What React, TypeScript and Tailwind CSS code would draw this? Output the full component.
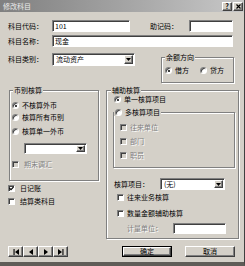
import type { ReactNode } from 'react'

const sunken =
  'border border-t-[#808080] border-l-[#808080] border-b-white border-r-white shadow-[inset_1px_1px_0_#404040]'
const raised =
  'border border-t-white border-l-white border-b-[#404040] border-r-[#404040] shadow-[inset_-1px_-1px_0_#808080] bg-[#d4d0c8]'
const etched = 'border border-[#808080] shadow-[inset_1px_1px_0_#fff,1px_1px_0_#fff]'
const grayText = 'text-[#808080] [text-shadow:1px_1px_0_#fff]'

function Radio({ checked, label, className = '' }: { checked?: boolean; label: string; className?: string }) {
  return (
    <div className={`flex h-[9px] items-center ${className}`}>
      <span className={`flex h-[7px] w-[7px] shrink-0 items-center justify-center rounded-full bg-white ${sunken}`}>
        {checked && <span className="h-[2px] w-[2px] rounded-full bg-black" />}
      </span>
      <span className="ml-[3px] whitespace-nowrap">{label}</span>
    </div>
  )
}

function Check({
  checked,
  disabled,
  label,
  className = '',
  gap = 'ml-[5px]',
}: {
  checked?: boolean
  disabled?: boolean
  label: string
  className?: string
  gap?: string
}) {
  return (
    <div className={`flex h-[9px] items-center ${className}`}>
      <span
        className={`flex h-[7px] w-[7px] shrink-0 items-center justify-center ${sunken} ${
          disabled ? 'bg-[#d4d0c8]' : 'bg-white'
        }`}
      >
        {checked && (
          <svg width="5" height="5" viewBox="0 0 5 5" aria-hidden>
            <path d="M0.5 2.2 L2 3.7 L4.6 0.8" fill="none" stroke="#000" strokeWidth="1.1" />
          </svg>
        )}
      </span>
      <span className={`${gap} whitespace-nowrap ${disabled ? grayText : ''}`}>{label}</span>
    </div>
  )
}

function DownArrow() {
  return (
    <span className={`flex h-full w-[9px] shrink-0 items-center justify-center ${raised}`}>
      <svg width="5" height="3" viewBox="0 0 5 3" aria-hidden>
        <path d="M0 0 H5 L2.5 3 Z" fill="#000" />
      </svg>
    </span>
  )
}

function Select({ value, className }: { value?: string; className: string }) {
  return (
    <div className={`flex bg-white p-[1px] ${sunken} ${className}`}>
      <span className="flex flex-1 items-center pl-[2px] whitespace-nowrap">{value}</span>
      <DownArrow />
    </div>
  )
}

function Input({ value, className }: { value?: string; className: string }) {
  return (
    <div className={`flex items-center bg-white pl-[2px] ${sunken} ${className}`}>
      <span className="whitespace-nowrap">{value}</span>
    </div>
  )
}

function GroupLabel({ children, className = '' }: { children: ReactNode; className?: string }) {
  return (
    <div className={`-mt-[5px] flex h-[8px] w-fit items-center bg-[#d4d0c8] px-[1px] ${className}`}>{children}</div>
  )
}

function NavButton({ d }: { d: string }) {
  return (
    <div className={`flex h-[11px] w-[15px] items-center justify-center ${raised}`}>
      <svg width="6" height="6" viewBox="0 0 6 6" aria-hidden>
        <path d={d} fill="#000" />
      </svg>
    </div>
  )
}

export default function App() {
  return (
    <div className="flex h-[266px] w-[245px] flex-col overflow-hidden border-r border-b-[4px] border-r-[#404040] border-b-[#5f5c57] bg-[#d4d0c8] font-['Noto_Sans_CJK_SC',sans-serif] text-[7px] leading-none text-black">
      {/* title bar */}
      <div className="flex h-[12px] shrink-0 items-center bg-linear-to-r from-[#808080] to-[#c8c8c8] pr-[1px] pl-[3px]">
        <span className="text-[#ececec]">修改科目</span>
        <div className={`ml-auto flex h-[9px] w-[10px] items-center justify-center text-[7px] font-bold ${raised}`}>?</div>
        <div className={`ml-[1px] flex h-[9px] w-[10px] items-center justify-center ${raised}`}>
          <svg width="5" height="5" viewBox="0 0 5 5" aria-hidden>
            <path d="M0.5 0.5 L4.5 4.5 M4.5 0.5 L0.5 4.5" stroke="#000" strokeWidth="1.2" />
          </svg>
        </div>
      </div>

      <div className="flex flex-1 flex-col pt-[8px] pl-[8px]">
        {/* 科目代码 / 助记码 */}
        <div className="flex h-[12px] items-center">
          <span className="w-[44px]">科目代码：</span>
          <Input value="101" className="h-[12px] w-[78px]" />
          <span className="ml-[20px] w-[39px]">助记码：</span>
          <Input className="h-[12px] w-[44px]" />
        </div>

        {/* 科目名称 */}
        <div className="mt-[3px] flex h-[12px] items-center">
          <span className="w-[44px]">科目名称：</span>
          <Input value="现金" className="h-[12px] w-[181px]" />
        </div>

        {/* 科目类别 + 余额方向 */}
        <div className="mt-[6px] flex items-start">
          <span className="flex h-[13px] w-[44px] items-center">科目类别：</span>
          <Select value="流动资产" className="h-[13px] w-[83px]" />
          <div className={`mt-[4px] ml-[26px] h-[26px] w-[73px] ${etched}`}>
            <GroupLabel className="ml-[3px]">余额方向</GroupLabel>
            <div className="mt-[5px] flex">
              <Radio checked label="借方" className="ml-[3px]" />
              <Radio label="贷方" className="ml-[11px]" />
            </div>
          </div>
        </div>

        {/* 币别核算 + 辅助核算 */}
        <div className="mt-[7px] flex items-start">
          <div className="ml-[1px] flex w-[90px] flex-col">
            <div className={`h-[91px] ${etched}`}>
              <GroupLabel className="ml-[3px]">币别核算</GroupLabel>
              <Radio checked label="不核算外币" className="mt-[7px] ml-[2px]" />
              <Radio label="核算所有币别" className="mt-[3px] ml-[2px]" />
              <Radio label="核算单一外币" className="mt-[5px] ml-[2px]" />
              <Select className="mt-[7px] ml-[14px] h-[11px] w-[63px]" />
              <Check disabled label="期末调汇" className="mt-[6px] ml-[2px]" />
            </div>
            <Check checked label="日记账" className="mt-[3px] -ml-[1px]" />
            <Check label="结算类科目" className="mt-[4px] -ml-[1px]" />
          </div>

          <div className={`ml-[7px] h-[149px] w-[133px] ${etched}`}>
            <GroupLabel className="ml-[4px]">辅助核算</GroupLabel>
            <Radio checked label="单一核算项目" className="mt-[1px] ml-[7px]" />
            <div className={`mt-[8px] ml-[6px] h-[56px] w-[122px] ${etched}`}>
              <GroupLabel>
                <Radio label="多核算项目" />
              </GroupLabel>
              <Check disabled label="往来单位" className="mt-[7px] ml-[6px]" gap="ml-[3px]" />
              <Check disabled label="部门" className="mt-[5px] ml-[6px]" gap="ml-[3px]" />
              <Check disabled label="职员" className="mt-[5px] ml-[6px]" gap="ml-[3px]" />
            </div>
            <div className="mt-[10px] flex h-[12px] items-center">
              <span className="ml-[7px] w-[46px]">核算项目：</span>
              <Select value="(无)" className="h-[12px] w-[65px]" />
            </div>
            <Check label="往来业务核算" className="mt-[3px] ml-[10px]" gap="ml-[3px]" />
            <Check label="数量金额辅助核算" className="mt-[7px] ml-[10px]" gap="ml-[3px]" />
            <div className="mt-[5px] flex h-[11px] items-center">
              <span className={`ml-[20px] w-[46px] ${grayText}`}>计量单位：</span>
              <Input className="h-[11px] w-[53px]" />
            </div>
          </div>
        </div>

        {/* bottom buttons */}
        <div className="mt-[7px] flex h-[11px] items-center">
          <NavButton d="M0.5 0 H1.6 V6 H0.5 Z M6 0 V6 L2 3 Z" />
          <NavButton d="M5 0 V6 L1 3 Z" />
          <NavButton d="M1 0 V6 L5 3 Z" />
          <NavButton d="M0 0 V6 L4 3 Z M4.4 0 H5.5 V6 H4.4 Z" />
          <div className="ml-[54px] flex h-[11px] w-[50px] border border-black">
            <div className={`flex flex-1 items-center justify-center ${raised}`}>确定</div>
          </div>
          <div className={`ml-[13px] flex h-[11px] w-[50px] items-center justify-center ${raised}`}>取消</div>
        </div>
      </div>
    </div>
  )
}
